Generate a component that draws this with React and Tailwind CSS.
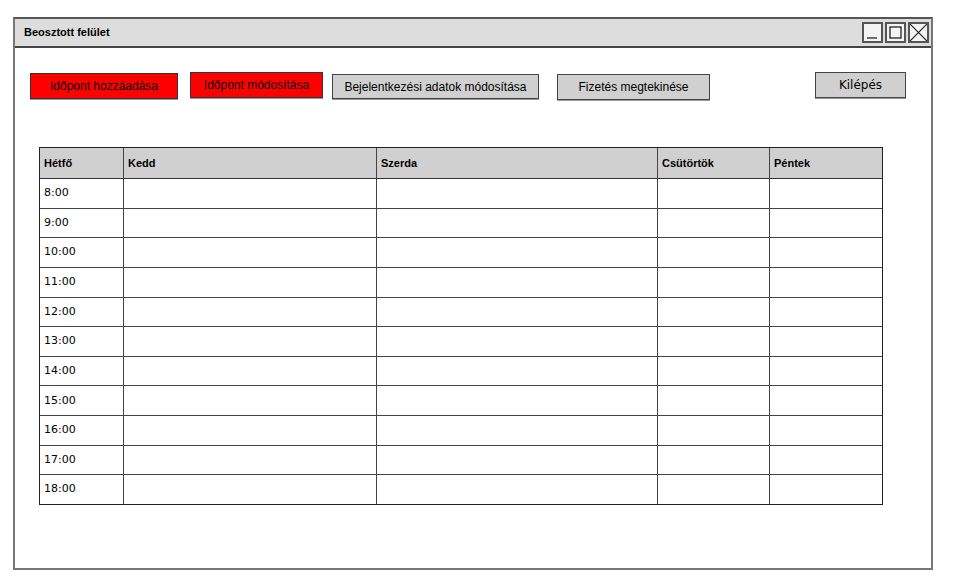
import React from 'react';

const days = [
  { name: 'Hétfő', w: 'w-[84px]' },
  { name: 'Kedd', w: 'w-[253px]' },
  { name: 'Szerda', w: 'w-[281px]' },
  { name: 'Csütörtök', w: 'w-[112px]' },
  { name: 'Péntek', w: 'w-[113px]' }
];

const hours = ['8:00', '9:00', '10:00', '11:00', '12:00', '13:00', '14:00', '15:00', '16:00', '17:00', '18:00'];

const sans = "font-['Liberation_Sans',Arial,sans-serif]";
const dejavu = "font-['DejaVu_Sans',Verdana,sans-serif]";

const WinButton = ({ children }) => (
  <div className="w-[21px] h-[21px] border-2 border-[#555] bg-[#f4f4f4] flex items-center justify-center">
    {children}
  </div>
);

const App = () => {
  return (
    <div className="w-[953px] h-[578px] bg-white pl-[13px] pt-[17px]">
      <div className="w-[920px] h-[553px] border-2 border-[#777] border-t-[#555] flex flex-col">
        {/* title bar */}
        <div className="h-[29px] bg-[#dddddd] border-b-2 border-[#444] flex items-center justify-between pl-[9px] pr-[2px]">
          <span className={`${sans} text-[11px] font-bold text-black`}>Beosztott felület</span>
          <div className="flex gap-[2px]">
            <WinButton>
              <svg width="15" height="15" viewBox="0 0 15 15">
                <line x1="2" y1="13" x2="12" y2="13" stroke="#222" strokeWidth="1.3" />
              </svg>
            </WinButton>
            <WinButton>
              <svg width="15" height="15" viewBox="0 0 15 15">
                <rect x="2" y="2" width="11" height="11" fill="none" stroke="#222" strokeWidth="1.3" />
              </svg>
            </WinButton>
            <WinButton>
              <svg width="17" height="17" viewBox="0 0 17 17">
                <path d="M0 0 L17 17 M17 0 L0 17" stroke="#222" strokeWidth="1.2" />
              </svg>
            </WinButton>
          </div>
        </div>

        {/* action buttons */}
        <div className={`${sans} flex items-start pl-[15px] pt-[23px] text-[12px] text-black`}>
          <button className="mt-[2px] w-[148px] h-[26px] bg-[#ff0000] border border-[#333] shadow-[0_1px_0_#999]">
            Időpont hozzáadása
          </button>
          <button className="ml-[12px] mt-[1px] w-[133px] h-[26px] bg-[#ff0000] border border-[#333] shadow-[0_1px_0_#999]">
            Időpont módosítása
          </button>
          <button className="ml-[9px] mt-[3px] w-[207px] h-[25px] bg-[#d0d0d0] border border-[#444] shadow-[0_1px_0_#999]">
            Bejelentkezési adatok módosítása
          </button>
          <button className="ml-[18px] mt-[3px] w-[153px] h-[26px] bg-[#d0d0d0] border border-[#444] shadow-[0_1px_0_#999]">
            Fizetés megtekinése
          </button>
          <button className={`${dejavu} ml-[105px] mt-[1px] w-[91px] h-[26px] bg-[#d0d0d0] border border-[#444] text-[12px] shadow-[0_1px_0_#999]`}>
            Kilépés
          </button>
        </div>

        {/* schedule table */}
        <div className="ml-[24px] mt-[47px] w-[844px] h-[358px] border border-[#222] flex flex-col">
          <div className="h-[31px] flex bg-[#d0d0d0] border-b border-[#333]">
            {days.map((d, i) => (
              <div
                key={d.name}
                className={`${d.w} ${i < days.length - 1 ? 'border-r border-[#444]' : ''} ${sans} text-[11px] font-bold text-black flex items-center pl-[4px] shrink-0`}
              >
                {d.name}
              </div>
            ))}
          </div>
          {hours.map((h, r) => (
            <div key={h} className={`flex-1 flex ${r < hours.length - 1 ? 'border-b border-[#444]' : ''}`}>
              {days.map((d, i) => (
                <div
                  key={d.name}
                  className={`${d.w} ${i < days.length - 1 ? 'border-r border-[#444]' : ''} shrink-0 flex items-center pl-[4px] ${dejavu} text-[11px] text-black`}
                >
                  {i === 0 ? h : null}
                </div>
              ))}
            </div>
          ))}
        </div>
      </div>
    </div>
  );
};

export default App;
